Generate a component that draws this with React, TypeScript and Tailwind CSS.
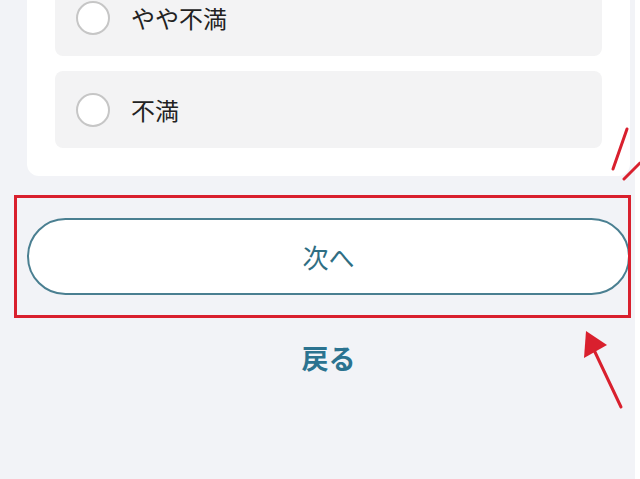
import React from 'react';

const options = ['やや不満', '不満'];

const Option: React.FC<{ label: string }> = ({ label }) => (
  <div className="flex h-[77px] items-center gap-[21px] rounded-lg bg-[#f3f3f4] pl-[21px]">
    <span className="h-[34px] w-[34px] shrink-0 rounded-full border-2 border-[#c6c6c6] bg-white"></span>
    <span className="text-[24px] leading-none text-[#222]">{label}</span>
  </div>
);

export default function App() {
  return (
    <div
      className="relative flex h-[479px] w-[640px] overflow-hidden bg-white"
      style={{ fontFamily: '"Noto Sans CJK JP", "Noto Sans", sans-serif' }}
    >
      {/* page */}
      <div className="flex h-full w-[635px] flex-col bg-[#f2f3f7] pl-[27px] pr-[5px]">
        {/* question card, top cut off */}
        <div className="-mt-[49px] flex flex-col gap-[15px] rounded-b-xl bg-white px-[28px] pb-[28px] pt-[28px]">
          {options.map((o) => (
            <Option key={o} label={o} />
          ))}
        </div>

        <button className="mt-[42px] flex h-[77px] items-center justify-center rounded-full border-2 border-[#4a7f91] bg-white text-[26px] text-[#2f6e83]">
          次へ
        </button>

        <button className="mt-[49px] self-center text-[27px] font-bold leading-none text-[#2b7390]">
          戻る
        </button>
      </div>

      {/* red annotations */}
      <div className="pointer-events-none absolute left-[14px] top-[195px] h-[123px] w-[617px] border-[3px] border-[#d9202e]"></div>
      <svg className="pointer-events-none absolute left-0 top-0" width="640" height="479" viewBox="0 0 640 479">
        <g stroke="#d9202e" strokeWidth="3" strokeLinecap="round" fill="none">
          <line x1="627" y1="129" x2="613" y2="169" />
          <line x1="640" y1="163" x2="624" y2="179" />
          <line x1="621" y1="407" x2="594" y2="350" />
        </g>
        <polygon points="586,331 584,358 607,345" fill="#d9202e" />
      </svg>
    </div>
  );
}
